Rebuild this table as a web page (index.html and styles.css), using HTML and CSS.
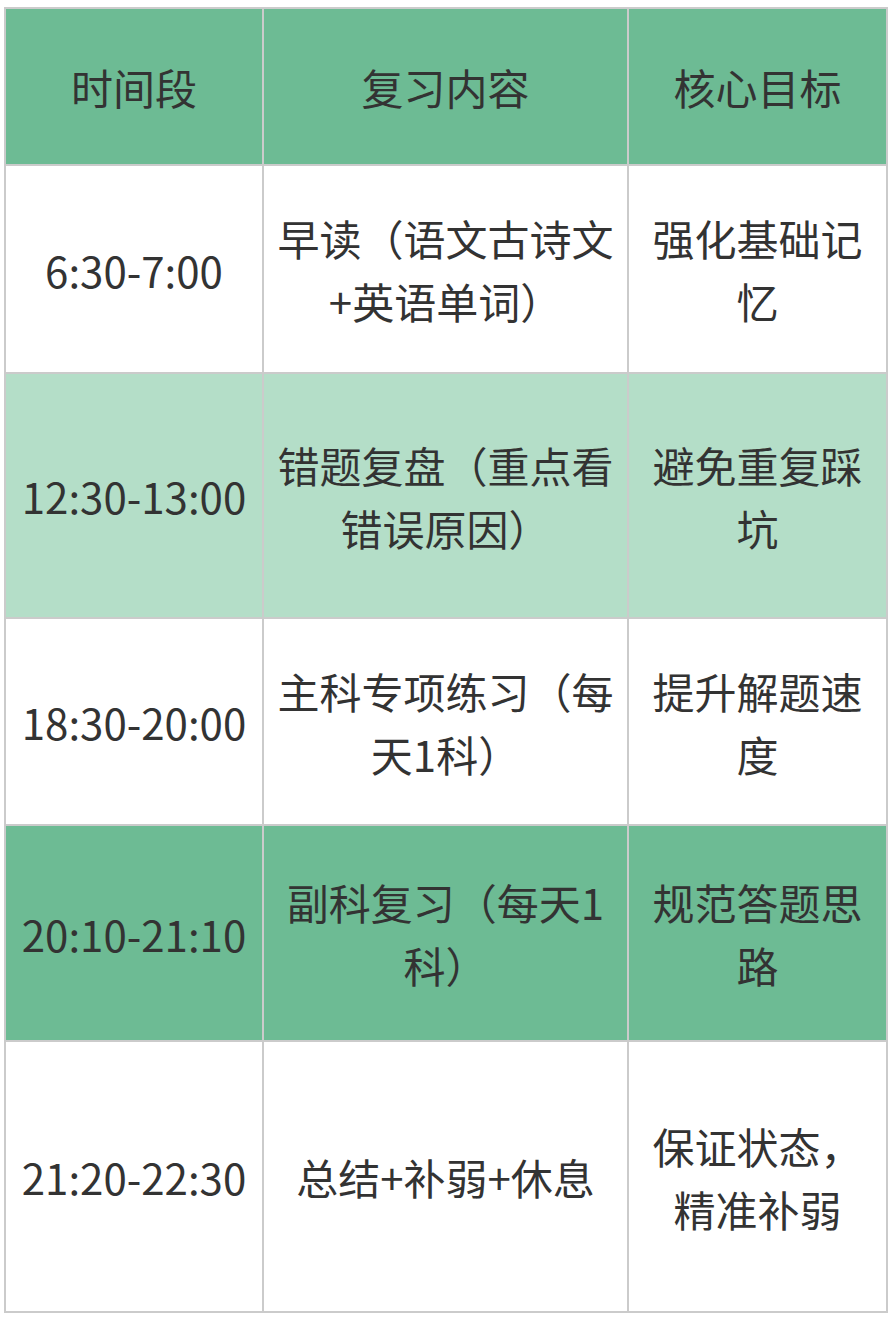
FILE: index.html
```html
<!DOCTYPE html>
<html lang="zh-CN">
<head>
<meta charset="utf-8">
<link rel="stylesheet" href="styles.css">
</head>
<body>
<table class="plan">
  <colgroup>
    <col class="c1">
    <col class="c2">
    <col class="c3">
  </colgroup>
  <thead>
    <tr class="r-head">
      <th>时间段</th>
      <th>复习内容</th>
      <th>核心目标</th>
    </tr>
  </thead>
  <tbody>
    <tr class="r1">
      <td>6:30-7:00</td>
      <td>早读（语文古诗文+英语单词）</td>
      <td>强化基础记忆</td>
    </tr>
    <tr class="r2 light">
      <td>12:30-13:00</td>
      <td>错题复盘（重点看错误原因）</td>
      <td>避免重复踩坑</td>
    </tr>
    <tr class="r3">
      <td>18:30-20:00</td>
      <td>主科专项练习（每天1科）</td>
      <td>提升解题速度</td>
    </tr>
    <tr class="r4 dark">
      <td>20:10-21:10</td>
      <td>副科复习（每天1科）</td>
      <td>规范答题思路</td>
    </tr>
    <tr class="r5">
      <td>21:20-22:30</td>
      <td>总结+补弱+休息</td>
      <td>保证状态，精准补弱</td>
    </tr>
  </tbody>
</table>
</body>
</html>
```

FILE: styles.css
```css
html, body {
  margin: 0;
  padding: 0;
  background: #ffffff;
}
body {
  padding: 7px 0 0 4px;
  font-family: "Noto Sans CJK SC", "Noto Sans", sans-serif;
  color: #333333;
}
.plan {
  border-collapse: collapse;
  table-layout: fixed;
  width: 882px;
  font-size: 42px;
  line-height: 63px;
}
.c1 { width: 258px; }
.c2 { width: 365px; }
.c3 { width: 259px; }
.plan th,
.plan td {
  border: 2px solid #cbcbcb;
  padding: 0 12px;
  text-align: center;
  vertical-align: middle;
  font-weight: 400;
}
.r-head { background: #6dbb94; height: 157px; }
.r1 { height: 208px; }
.r2 { height: 245px; }
.r3 { height: 207px; }
.r4 { height: 216px; }
.r5 { height: 271px; }
.light { background: #b4dec8; }
.dark { background: #6dbb94; }
```
